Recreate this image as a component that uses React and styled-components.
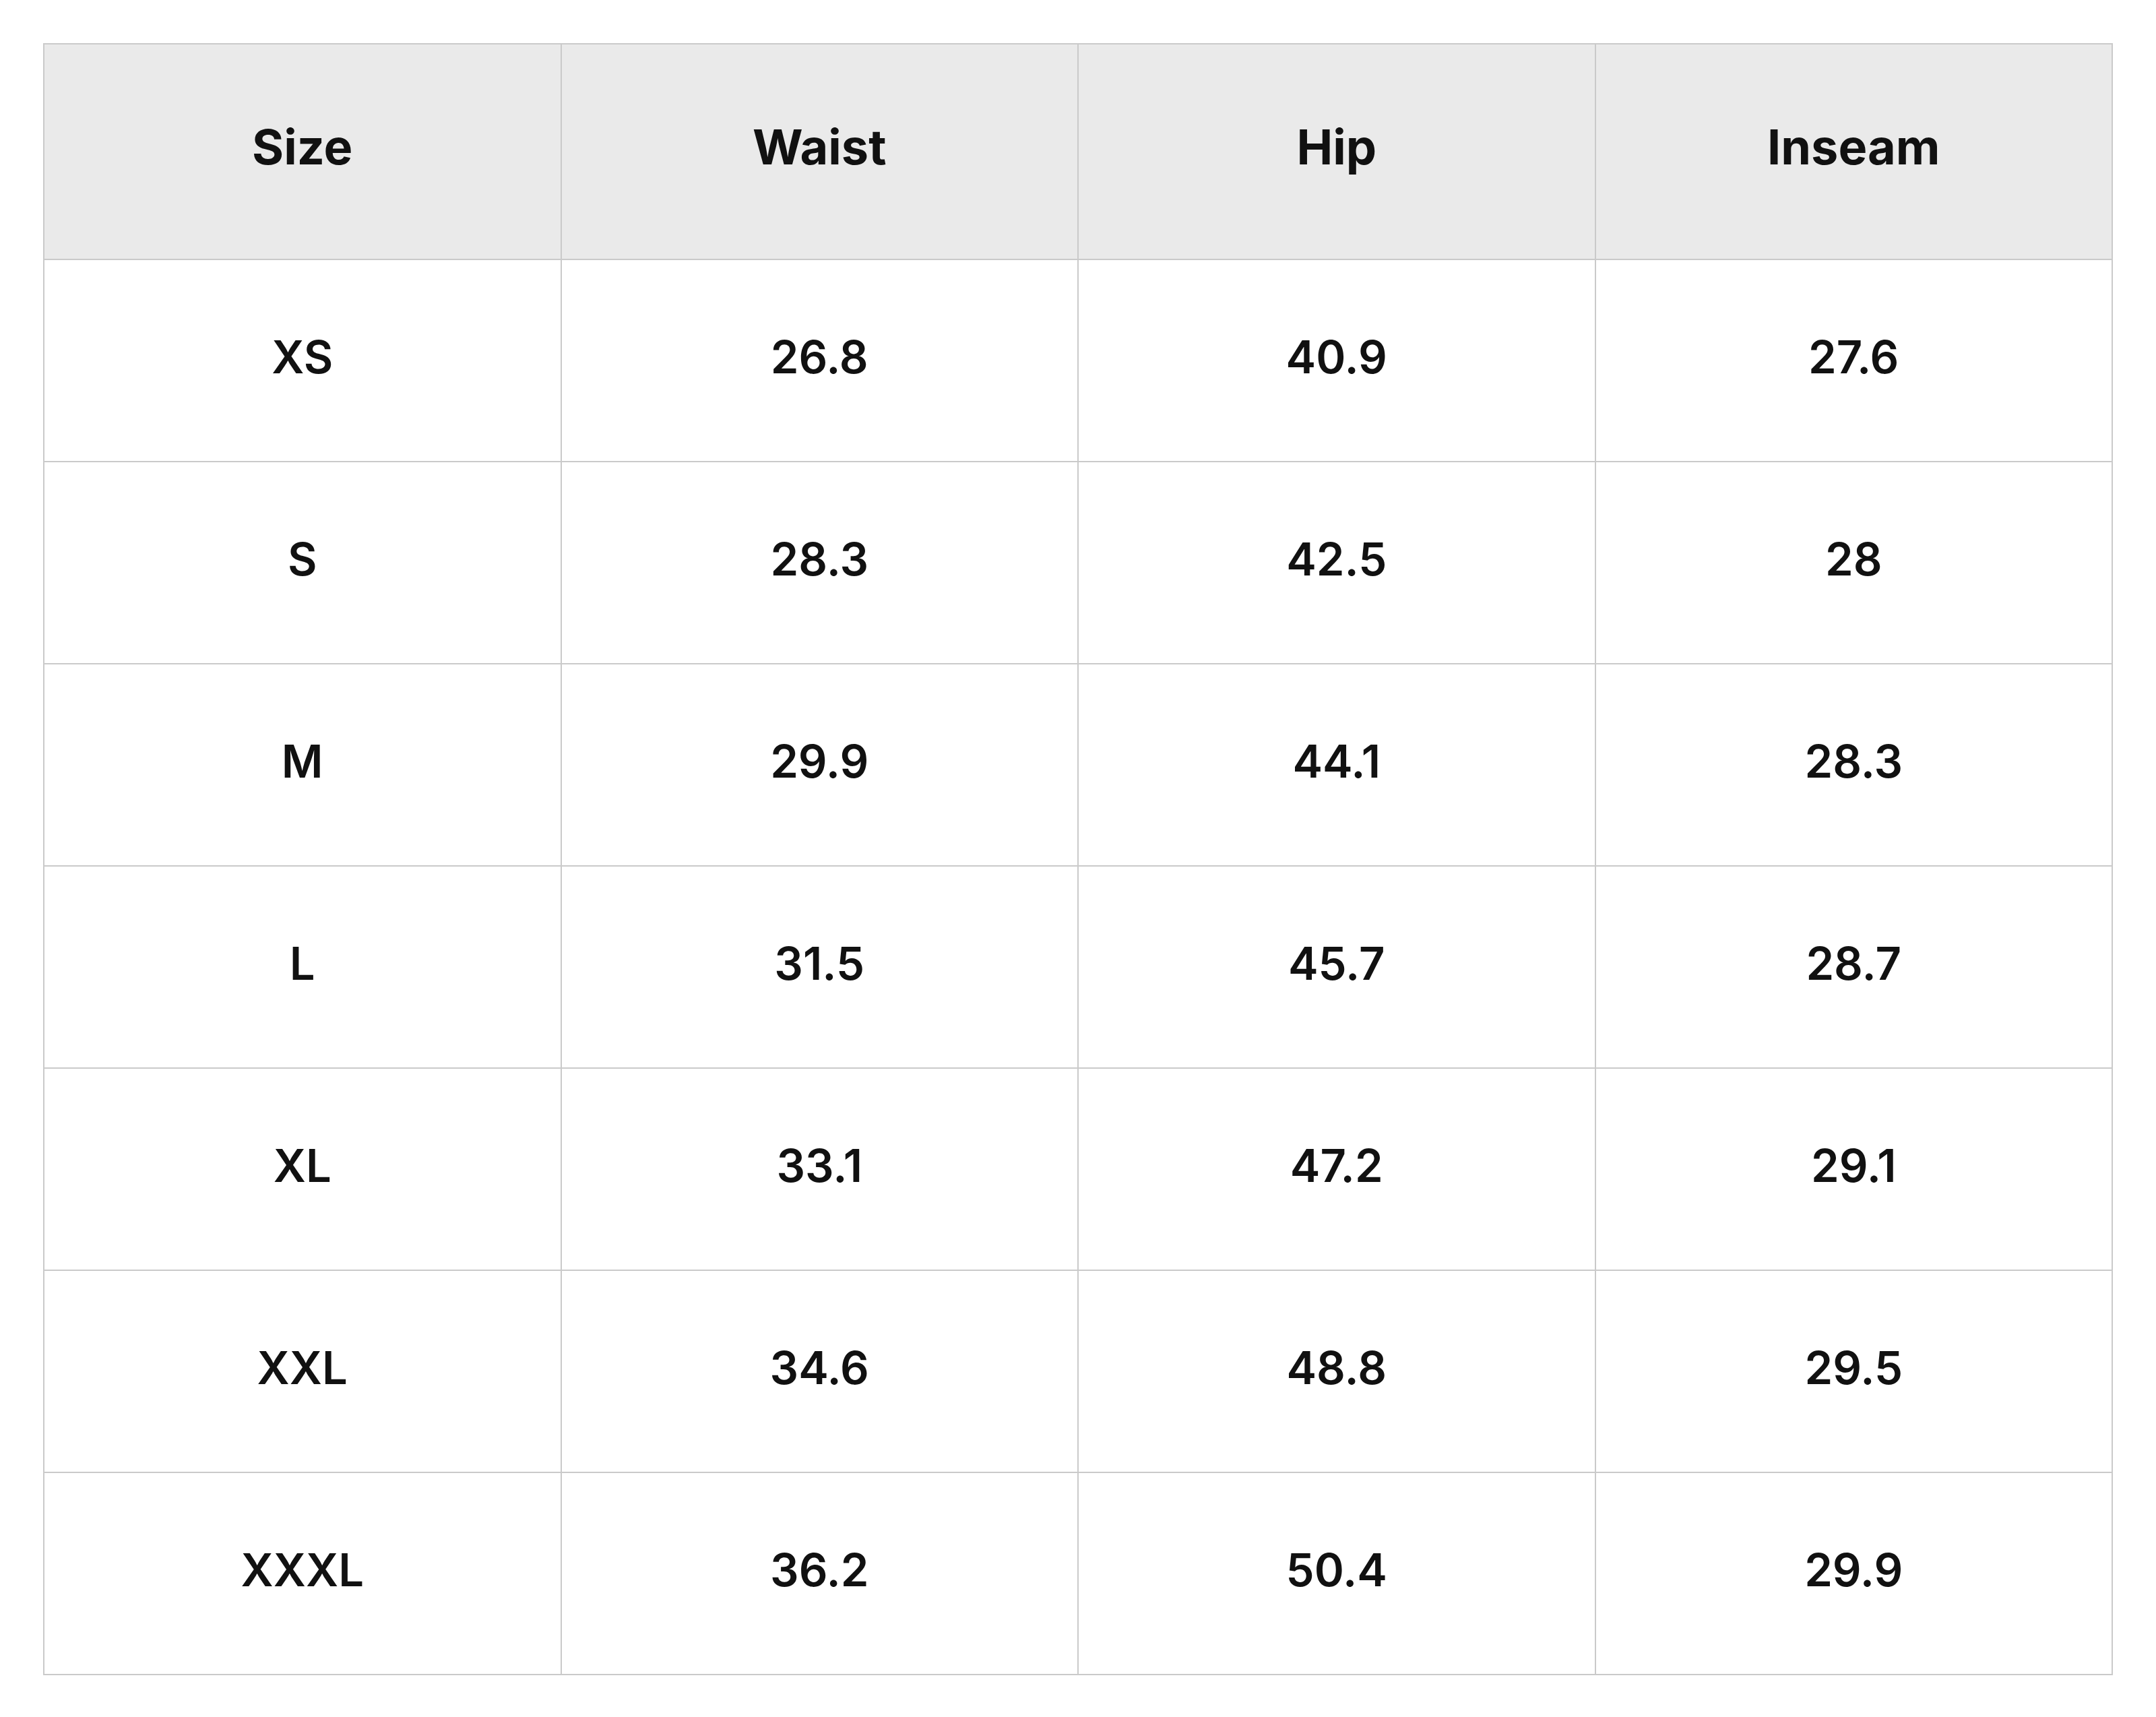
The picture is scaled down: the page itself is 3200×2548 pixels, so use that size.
import React from "react";
import styled, { createGlobalStyle } from "styled-components";

const columns = ["Size", "Waist", "Hip", "Inseam"];

const rows = [
  ["XS", "26.8", "40.9", "27.6"],
  ["S", "28.3", "42.5", "28"],
  ["M", "29.9", "44.1", "28.3"],
  ["L", "31.5", "45.7", "28.7"],
  ["XL", "33.1", "47.2", "29.1"],
  ["XXL", "34.6", "48.8", "29.5"],
  ["XXXL", "36.2", "50.4", "29.9"],
];

const App = () => {
  return (
    <>
      <GlobalStyle />
      <Page>
        <SizeTable>
          <thead>
            <tr>
              {columns.map((col) => (
                <HeadCell key={col}>{col}</HeadCell>
              ))}
            </tr>
          </thead>
          <tbody>
            {rows.map((row) => (
              <tr key={row[0]}>
                {row.map((value, i) => (
                  <BodyCell key={i}>{value}</BodyCell>
                ))}
              </tr>
            ))}
          </tbody>
        </SizeTable>
      </Page>
    </>
  );
};

const GlobalStyle = createGlobalStyle`
  body {
    margin: 0;
    background: #fff;
    font-family: Inter, "Liberation Sans", sans-serif;
    color: #111;
  }
`;

const Page = styled.div`
  padding: 64px;
`;

const SizeTable = styled.table`
  width: 100%;
  border-collapse: collapse;
  table-layout: fixed;
`;

const HeadCell = styled.th`
  height: 302px;
  padding: 0 0 16px;
  background: #eaeaea;
  border: 2px solid #cacaca;
  font-size: 72px;
  font-weight: 700;
  text-align: center;
  vertical-align: middle;
`;

const BodyCell = styled.td`
  height: 286px;
  padding: 0 0 12px;
  border: 2px solid #cacaca;
  font-size: 67px;
  font-weight: 600;
  text-align: center;
  vertical-align: middle;
`;

export default App;
